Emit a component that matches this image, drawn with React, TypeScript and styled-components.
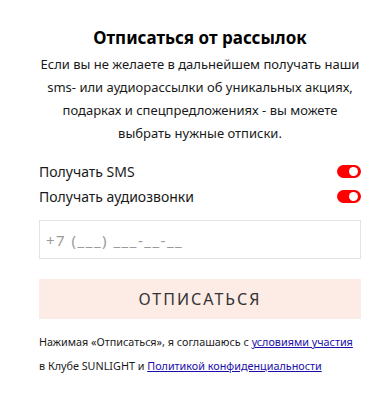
import { FC, useState } from 'react';
import styled, { createGlobalStyle } from 'styled-components';

const GlobalStyle = createGlobalStyle`
  body {
    margin: 0;
    background: #fff;
    font-family: 'Noto Sans', 'Lato', sans-serif;
    color: #1a1a1a;
  }
`;

const Page = styled.div`
  width: 322px;
  padding: 26px 0 0 39px;
`;

const Title = styled.h2`
  margin: 0;
  font-size: 17px;
  font-weight: 700;
  text-align: center;
  line-height: 24px;
  color: #000;
`;

const Lead = styled.p`
  margin: 3px 0 14px;
  font-size: 13px;
  line-height: 23px;
  text-align: center;
  color: #1a1a1a;
`;

const OptionRow = styled.label`
  display: flex;
  align-items: center;
  justify-content: space-between;
  height: 25px;
  font-size: 14px;
  color: #1a1a1a;
`;

const Toggle = styled.span<{ $on: boolean }>`
  position: relative;
  width: 24px;
  height: 13px;
  border-radius: 7px;
  background: ${({ $on }) => ($on ? '#f00' : '#ccc')};
  cursor: pointer;

  &::after {
    content: '';
    position: absolute;
    top: 2px;
    left: ${({ $on }) => ($on ? '12px' : '2px')};
    width: 9px;
    height: 9px;
    border-radius: 50%;
    background: #fff;
  }
`;

const PhoneInput = styled.input`
  box-sizing: border-box;
  display: block;
  width: 100%;
  height: 39px;
  margin-top: 11px;
  padding: 0 6px;
  border: 1px solid #e3e3e3;
  font-family: inherit;
  font-size: 15px;
  letter-spacing: 1.5px;
  color: #333;
  outline: none;

  &::placeholder {
    color: #9a9a9a;
  }
`;

const SubmitButton = styled.button`
  display: block;
  width: 100%;
  height: 40px;
  margin-top: 20px;
  border: 0;
  background: #fdece6;
  font-family: inherit;
  font-size: 16px;
  letter-spacing: 2px;
  color: #333;
  cursor: pointer;
`;

const Note = styled.p`
  margin: 11px 0 0;
  font-size: 10.8px;
  line-height: 24px;
  color: #1a1a1a;
`;

const Link = styled.a`
  color: #1a0dab;
  text-decoration: underline;
`;

const App: FC = () => {
  const [sms, setSms] = useState(true);
  const [calls, setCalls] = useState(true);

  return (
    <>
      <GlobalStyle />
      <Page>
        <Title>Отписаться от рассылок</Title>
        <Lead>
          Если вы не желаете в дальнейшем получать наши
          <br />
          sms- или аудиорассылки об уникальных акциях,
          <br />
          подарках и спецпредложениях - вы можете
          <br />
          выбрать нужные отписки.
        </Lead>
        <OptionRow onClick={() => setSms(!sms)}>
          Получать SMS
          <Toggle $on={sms} />
        </OptionRow>
        <OptionRow onClick={() => setCalls(!calls)}>
          Получать аудиозвонки
          <Toggle $on={calls} />
        </OptionRow>
        <PhoneInput placeholder="+7 (___) ___-__-__" />
        <SubmitButton>ОТПИСАТЬСЯ</SubmitButton>
        <Note>
          Нажимая «Отписаться», я соглашаюсь с <Link href="#">условиями участия</Link>
          <br />в Клубе SUNLIGHT и <Link href="#">Политикой конфиденциальности</Link>
        </Note>
      </Page>
    </>
  );
};

export default App;
